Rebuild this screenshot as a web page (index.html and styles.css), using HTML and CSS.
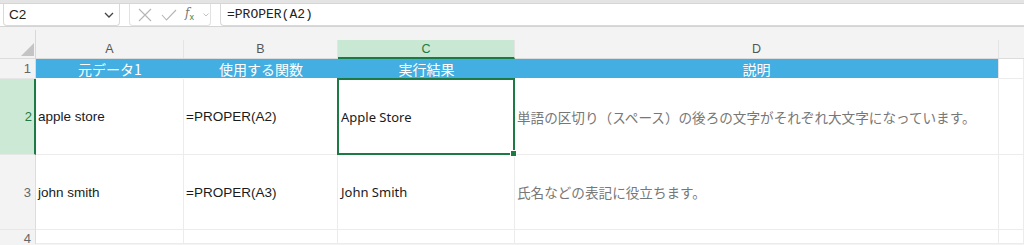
FILE: index.html
```html
<!DOCTYPE html>
<html lang="ja">
<head>
<meta charset="utf-8">
<title>PROPER</title>
<link rel="stylesheet" href="styles.css">
</head>
<body>
<div class="topband"></div>
<div class="toolbar">
  <div class="namebox">
    <span class="ref">C2</span>
    <svg class="chev" width="10" height="6" viewBox="0 0 10 6"><path d="M1 1 L5 5 L9 1" fill="none" stroke="#444" stroke-width="1.3"/></svg>
  </div>
  <div class="fxbox">
    <svg width="14" height="14" viewBox="0 0 14 14"><path d="M1 1 L13 13 M13 1 L1 13" stroke="#b5b5b5" stroke-width="1.1" fill="none"/></svg>
    <svg width="16" height="12" viewBox="0 0 16 12"><path d="M1 6 L5.5 11 L15 1" stroke="#b5b5b5" stroke-width="1.1" fill="none"/></svg>
    <span class="fx">f<sub>x</sub></span>
    <svg width="6" height="4" viewBox="0 0 6 4"><path d="M0.5 0.5 L3 3 L5.5 0.5" stroke="#bbb" stroke-width="0.9" fill="none"/></svg>
  </div>
  <div class="formula">=PROPER(A2)</div>
</div>
<div class="sheet">
  <div class="corner"><svg width="13" height="13" viewBox="0 0 13 13"><path d="M13 0 L13 13 L0 13 Z" fill="#c4c4c4"/></svg></div>
  <div class="colhead"><span>A</span></div>
  <div class="colhead"><span>B</span></div>
  <div class="colhead sel"><span>C</span></div>
  <div class="colhead"><span>D</span></div>
  <div class="colhead last"><span></span></div>

  <div class="rowhead">1</div>
  <div class="cell title">元データ1</div>
  <div class="cell title">使用する関数</div>
  <div class="cell title">実行結果</div>
  <div class="cell title lasttitle">説明</div>
  <div class="cell"></div>

  <div class="rowhead selrow">2</div>
  <div class="cell arial">apple store</div>
  <div class="cell arial">=PROPER(A2)</div>
  <div class="cell noto active">Apple Store</div>
  <div class="cell note">単語の区切り（スペース）の後ろの文字がそれぞれ大文字になっています。</div>
  <div class="cell"></div>

  <div class="rowhead">3</div>
  <div class="cell arial">john smith</div>
  <div class="cell arial">=PROPER(A3)</div>
  <div class="cell noto">John Smith</div>
  <div class="cell note">氏名などの表記に役立ちます。</div>
  <div class="cell"></div>

  <div class="rowhead r4">4</div>
  <div class="cell"></div>
  <div class="cell"></div>
  <div class="cell"></div>
  <div class="cell"></div>
  <div class="cell"></div>
</div>
</body>
</html>
```

FILE: styles.css
```css
* { box-sizing: border-box; }
html, body { margin: 0; padding: 0; }
body {
  width: 1024px;
  height: 245px;
  overflow: hidden;
  background: #f3f3f3;
  font-family: "Liberation Sans", "Noto Sans CJK JP", sans-serif;
}
.topband {
  height: 4px;
  background: #e4e4e4;
  border-bottom: 1px solid #d6d6d6;
}
.toolbar {
  height: 23px;
  background: #ffffff;
  border-bottom: 1px solid #d4d4d4;
  display: flex;
  align-items: flex-start;
  padding-left: 3px;
  gap: 9px;
}
.namebox {
  width: 117px;
  height: 22px;
  border: 1px solid #d9d9d9;
  border-top: none;
  border-radius: 0 0 4px 4px;
  display: flex;
  align-items: center;
  justify-content: space-between;
  padding: 0 5px 0 5px;
  font-size: 13.5px;
  color: #222;
}
.fxbox {
  width: 82px;
  height: 22px;
  border: 1px solid #e2e2e2;
  border-top: none;
  border-radius: 0 0 4px 4px;
  display: flex;
  align-items: center;
  gap: 9px;
  padding-left: 8px;
}
.fx {
  font-family: "DejaVu Serif", "Liberation Serif", serif;
  font-style: italic;
  font-size: 12px;
  color: #777;
  margin-left: -1px;
}
.fx sub { font-size: 9px; color: #2b8a4b; font-style: normal; font-family: "Liberation Sans", sans-serif; }
.formula {
  flex: 1;
  height: 22px;
  border: 1px solid #d9d9d9;
  border-top: none;
  border-right: none;
  border-radius: 0 0 0 4px;
  padding-left: 6px;
  display: flex;
  align-items: center;
  font-family: "Liberation Mono", monospace;
  font-size: 13px;
  color: #222;
}
.sheet {
  display: grid;
  grid-template-columns: 36px 148px 154px 177px 484px 1fr;
  grid-template-rows: 32px 20px 76px 75px 14px;
  background: #ffffff;
}
.corner {
  background: #f3f3f3;
  border-bottom: 1px solid #dcdcdc;
  position: relative;
  display: flex;
  align-items: flex-end;
  justify-content: flex-end;
  padding: 0 2px 2px 0;
}
.corner::after {
  content: "";
  position: absolute;
  right: 0;
  top: 3px;
  bottom: 0;
  border-right: 1px solid #d8d8d8;
}
.colhead {
  background: #f3f3f3;
  border-bottom: 1px solid #dcdcdc;
  display: flex;
  align-items: flex-end;
  padding-top: 13px;
}
.colhead span {
  flex: 1;
  height: 18px;
  display: flex;
  align-items: center;
  justify-content: center;
  font-size: 12.5px;
  color: #555;
  border-right: 1px solid #e4e4e4;
}
.colhead.sel span {
  background: #c8e8d3;
  color: #1e7a44;
  border-bottom: 2px solid #1e7a44;
  margin-bottom: -1px;
  height: 19px;
}
.colhead.last span { border-right: none; }
.rowhead {
  background: #f3f3f3;
  border-bottom: 1px solid #e6e6e6;
  border-right: 1px solid #dcdcdc;
  display: flex;
  align-items: center;
  justify-content: flex-end;
  padding-right: 4px;
  font-size: 13px;
  color: #666;
}
.rowhead.selrow {
  background: #cbe9d5;
  color: #1e7a44;
  border-right: 2px solid #1e7a44;
  padding-right: 2px;
}
.rowhead.r4 { align-items: flex-start; padding-top: 1px; border-bottom: none; }
.cell {
  border-right: 1px solid #ececec;
  border-bottom: 1px solid #ececec;
  display: flex;
  align-items: center;
  padding-left: 2px;
  font-size: 13.5px;
  color: #1a1a1a;
  white-space: nowrap;
}
.cell.title {
  background: #43aee1;
  color: #ffffff;
  justify-content: center;
  padding-left: 0;
  font-family: "Noto Sans CJK JP", sans-serif;
  font-size: 14px;
  border-right: none;
  border-bottom: 1px solid #ffffff;
}
.cell.title.lasttitle { border-right: 1px solid #e4e4e4; }
.cell.noto {
  font-family: "Noto Sans", "Noto Sans CJK JP", sans-serif;
  font-size: 13px;
  padding-left: 3px;
}
.cell.note {
  font-family: "Noto Sans CJK JP", sans-serif;
  font-size: 13.6px;
  color: #777777;
}
.cell.active { position: relative; }
.cell.active::after {
  content: "";
  position: absolute;
  left: -1px;
  top: -1px;
  right: -1px;
  bottom: -1px;
  border: 2px solid #1e7a44;
}
.cell.active::before {
  content: "";
  position: absolute;
  right: -3px;
  bottom: -3px;
  width: 5px;
  height: 5px;
  background: #1e7a44;
  border: 1px solid #ffffff;
  z-index: 2;
}
```
